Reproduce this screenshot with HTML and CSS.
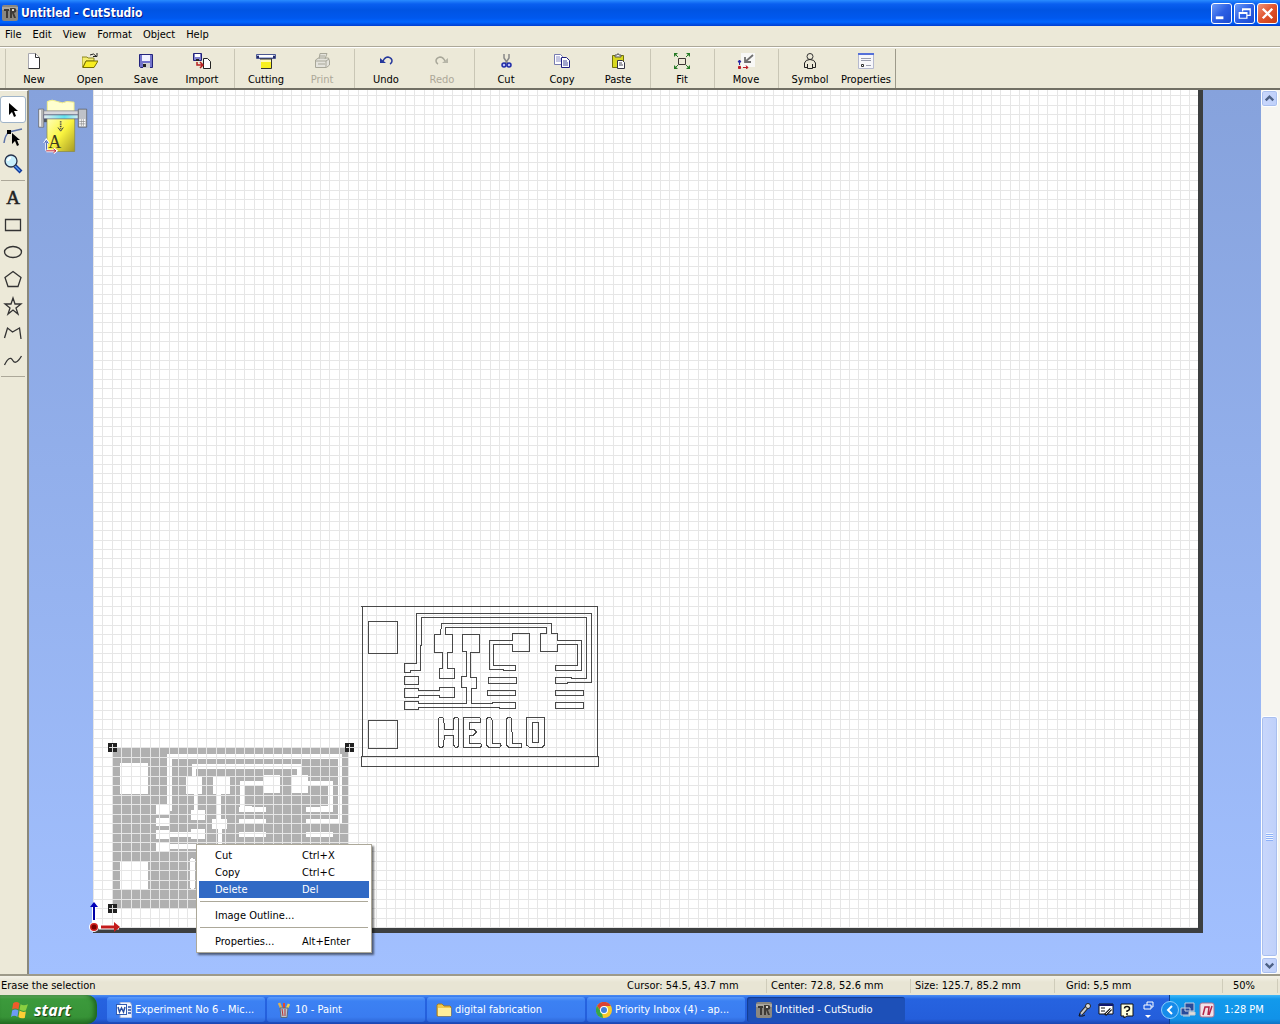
FILE: index.html
```html
<!DOCTYPE html>
<html lang="en">
<head>
<meta charset="utf-8">
<title>Untitled - CutStudio</title>
<link rel="stylesheet" href="styles.css">
</head>
<body>
<header class="titlebar">
  <svg class="app-icon" viewBox="0 0 16 16"><rect width="16" height="16" rx="2" fill="#8b8780"/><path d="M0 2h16v3H0z" fill="#aaa69e"/><path d="M2 4h5v2H6v7H4V6H2zM8 3h4q3 0 2 4l-2 1 2 5h-2l-2-5v5H8z" fill="#3e3a36"/><path d="M10 4h2v2h-2z" fill="#d8d4cc"/></svg>
  <h1>Untitled - CutStudio</h1>
  <button class="win-btn" aria-label="Minimize"><svg viewBox="0 0 20 20"><path d="M4 13h8v3H4z" fill="#fff"/></svg></button>
  <button class="win-btn" aria-label="Restore"><svg viewBox="0 0 20 20"><path d="M8 8V5h8v7h-3M4.500 9h8v6h-8zM5 10h7M8 6h8" fill="none" stroke="#fff" stroke-width="1.300"/></svg></button>
  <button class="win-btn close" aria-label="Close"><svg viewBox="0 0 20 20"><path d="M5 5l10 10M15 5L5 15" stroke="#fff" stroke-width="2.500"/></svg></button>
</header>
<nav class="menubar">
  <button>File</button><button>Edit</button><button>View</button><button>Format</button><button>Object</button><button>Help</button>
</nav>
<div class="toolbar">
  <div class="group">
    <button><svg viewBox="0 0 16 16"><path d="M2.500.5h7l4 4v11h-11z" fill="#fff" stroke="#a8a8b0"/><path d="M9.500.5v4h4M13.500 5v10.500h-11" fill="none" stroke="#333"/></svg>New</button>
    <button><svg viewBox="0 0 16 16"><path d="M0 4h5l1 1h6v3H4l-3 6H0z" fill="#f4ed70" stroke="#8c8620"/><path d="M4 8h12l-4 6.500H1z" fill="#f8ee20" stroke="#777000"/><path d="M8 2q4-2.500 6 1M11 3.500h4V0" fill="none" stroke="#222"/></svg>Open</button>
    <button><svg viewBox="0 0 16 16"><path d="M1.500 1.500h13v13h-12l-1-1z" fill="#7374cc" stroke="#23247c"/><path d="M4 2h8v6H4z" fill="#f2f2ff"/><path d="M5 10h7v5H5z" fill="#d3d3d3"/><path d="M5 11h3v3H5z" fill="#222"/></svg>Save</button>
    <button><svg class="wide" viewBox="0 0 18 16"><path d="M.5.5h8v7h-8z" fill="#8080ce" stroke="#222277"/><path d="M2 1h5v3H2z" fill="#fff"/><path d="M3 6h3v2H3z" fill="#222"/><path d="M10.500 5.500h4l3 3v7h-7z" fill="#fff" stroke="#222"/><path d="M4 9v3h5M7 9l3 3-3 3" fill="none" stroke="#b62020" stroke-width="1.500"/></svg>Import</button>
  </div>
  <div class="group">
    <button><svg class="wide" viewBox="0 0 20 16"><path d="M.5 1.500h19v4H.5z" fill="#aab4de" stroke="#4b5790"/><path d="M3 2h14v2H3z" fill="#fff"/><path d="M5 6h10v9H5z" fill="#f8f020"/><path d="M5 6h10v3H5z" fill="#fff9b8"/><path d="M4 6h12M15.500 6v9.500H5" fill="none" stroke="#333"/><path d="M1 3h2v2H1zM17 3h2v2h-2z" fill="#262c66"/></svg>Cutting</button>
    <button disabled><svg viewBox="0 0 16 16"><path d="M5 6l1-5.500h7L11 6M1.500 7l3-2h10l1 3v4l-3 2.500h-11z" fill="#e4e3dc" stroke="#a8a799"/><path d="M2 8h10v6M4 11h7M6 3h5M12 8l3-2" fill="none" stroke="#a8a799"/></svg>Print</button>
  </div>
  <div class="group">
    <button><svg viewBox="0 0 16 16"><path d="M5 8q2-4 5-4 4 1 4 4 0 2-2 3" fill="none" stroke="#25389c" stroke-width="1.500"/><path d="M2 5v5h6z" fill="#25389c"/></svg>Undo</button>
    <button disabled><svg viewBox="0 0 16 16"><path d="M11 8Q9 4 6 4 2 5 2 8q0 2 2 3" fill="none" stroke="#a8a799" stroke-width="1.500"/><path d="M14 5v5H8z" fill="#b7b6a8"/></svg>Redo</button>
  </div>
  <div class="group">
    <button><svg viewBox="0 0 16 16"><path d="M6 1v4l4 6M11 1v4l-4 6" fill="none" stroke="#888" stroke-width="1.500"/><circle cx="6" cy="12" r="2" fill="#b9bdf8" stroke="#1e2ba8" stroke-width="1.500"/><circle cx="11" cy="12" r="2" fill="#b9bdf8" stroke="#1e2ba8" stroke-width="1.500"/></svg>Cut</button>
    <button><svg viewBox="0 0 16 16"><path d="M.5 1.500h6l2 2v8h-8z" fill="#fff" stroke="#777bb0"/><path d="M2 4h4M2 6h5M2 8h5" stroke="#8a8dc6"/><path d="M7.500 4.500h5l3 3v7h-8z" fill="#fff" stroke="#202080"/><path d="M9 8h4M9 10h5M9 12h5" stroke="#454b9c"/></svg>Copy</button>
    <button><svg viewBox="0 0 16 16"><path d="M2.500 2.500h11v12h-11z" fill="#d8d820" stroke="#72720c"/><path d="M5 4V2h2l1-1.500L9 2h2v2z" fill="#eee" stroke="#555"/><path d="M7.500 7.500h5l2 2v6h-7z" fill="#fff" stroke="#334"/><path d="M9 10h3M9 12h4" stroke="#445"/></svg>Paste</button>
  </div>
  <div class="group">
    <button><svg viewBox="0 0 16 16"><path d="M4.500 5.500h7v6h-7z" fill="none" stroke="#3c3434"/><path d="M0 0h4L0 4zM16 0h-4l4 4zM0 16h4l-4-4zM16 16h-4l4-4z" fill="#267a26"/><path d="M1 1l3 3M15 1l-3 3M1 15l3-3M15 15l-3-3" stroke="#267a26"/></svg>Fit</button>
  </div>
  <div class="group">
    <button><svg class="wide" viewBox="0 0 18 16"><path d="M4 0h14v14H4z" fill="#f8f8f6"/><path d="M16 2L8 9M8 4v5h6" fill="none" stroke="#707070" stroke-width="1.800"/><path d="M2.500 12V9M1 9l1.500-2L4 9z" fill="#2727a4" stroke="#2727a4"/><path d="M1.500 13.500h2v2h-2zM6 14.500h5M9 12.500l2 2-2 1.500" fill="#bd1f28" stroke="#bd1f28"/></svg>Move</button>
  </div>
  <div class="group">
    <button><svg viewBox="0 0 16 16"><circle cx="8" cy="3.500" r="3" fill="none" stroke="#333"/><path d="M2.500 14.500V10q1-3.500 5.500-3.500T13.500 10v4.500h-3V11v4.500h-5V11v3.500z" fill="none" stroke="#222"/></svg>Symbol</button>
    <button><svg viewBox="0 0 16 16"><path d="M.5.5h15v15H.5z" fill="#f7f7fa" stroke="#b5b9ce"/><path d="M0 0h16v2H0z" fill="#5570d8"/><path d="M3 5.500h10M3 7.500h10M8 12.500h5" stroke="#9a9dad"/><path d="M3.500 11.500h2v2h-2z" fill="#fff" stroke="#303030"/></svg>Properties</button>
  </div>
</div>
<main class="work">
  <aside class="tools">
    <button class="active" aria-label="Select"><svg viewBox="0 0 20 20"><path d="M6 3v12l3-3 2 5 2-1-2-5h4z" fill="#000"/></svg></button>
    <button aria-label="Edit points"><svg class="plain" viewBox="0 0 20 20"><path d="M1 16q1-8 5-11l13-3" fill="none" stroke="#5c72a8" stroke-width="1.500"/><path d="M4 3h4v4H4zM9 6v11l3-3 2 5 2-1-2-5h3z" fill="#000"/></svg></button>
    <button aria-label="Zoom"><svg viewBox="0 0 20 20"><path d="M12 12l6 6" stroke="#123a9c" stroke-width="4"/><path d="M12 12l5 5" stroke="#5ba1f4"/><circle cx="8" cy="7" r="6" fill="#c8effc" stroke="#26324c"/><path d="M5 7q0-3 3-3" fill="none" stroke="#fff" stroke-width="2"/></svg></button>
    <hr>
    <button class="letter" aria-label="Text">A</button>
    <button aria-label="Rectangle"><svg viewBox="0 0 20 20"><path d="M2.500 4.500h15v11h-15z"/></svg></button>
    <button aria-label="Ellipse"><svg viewBox="0 0 20 20"><ellipse cx="10" cy="10" rx="8.500" ry="5.500"/></svg></button>
    <button aria-label="Polygon"><svg viewBox="0 0 20 20"><path d="M10 2.500l8 6-3 9H5l-3-9z"/></svg></button>
    <button aria-label="Star"><svg viewBox="0 0 20 20"><path d="M10 2l2 6h6l-5 4 2 6-5-4-5 4 2-6-5-4h6z"/></svg></button>
    <button aria-label="Polyline"><svg viewBox="0 0 20 20"><path d="M1.500 15l3-10 5 4 7-4 1.500 11"/></svg></button>
    <button aria-label="Curve"><svg viewBox="0 0 20 20"><path d="M1.500 15q5-10 8-5 3 6 9-4"/></svg></button>
    <hr>
  </aside>
  <section class="canvas">
    <svg class="cutter" viewBox="0 0 150 170">
      <defs><linearGradient id="sheet" x2="1" y2="1"><stop offset="0" stop-color="#ffffc0"/><stop offset=".5" stop-color="#fbf540"/><stop offset="1" stop-color="#a69a24"/></linearGradient><linearGradient id="bar"><stop offset="0" stop-color="#e8edf0"/><stop offset=".6" stop-color="#60e4ee"/><stop offset="1" stop-color="#d5eef2"/></linearGradient></defs>
      <path d="M28 40V10q14-8 30 0t28 0l22 2v30z" fill="#ffffcf" stroke="#f4f08a" stroke-width="3"/>
      <path d="M17 50h90v22H17z" fill="#4c5262"/>
      <path d="M27 56h83v104H27z" fill="url(#sheet)" stroke="#8a883c" stroke-width="2"/>
      <path d="M2 33h15v54H2z" fill="#f2f2f2" stroke="#555" stroke-width="2"/><path d="M12 34v52" stroke="#999" stroke-width="4"/>
      <path d="M17 38h104v12H17z" fill="#d8d8dc" stroke="#777" stroke-width="2"/><path d="M17 50h104v12H17z" fill="url(#bar)" stroke="#557" stroke-width="2"/>
      <path d="M121 33h25v54h-25z" fill="#bfc2c8" stroke="#555" stroke-width="2"/><path d="M124 63h18v21h-18z" fill="#fff"/><path d="M130 63v21M136 63v21M124 70h18M124 77h18" stroke="#888" stroke-width="2"/>
      <path d="M68 69v24" stroke="#444" stroke-width="5" stroke-dasharray="4 3"/><path d="M60 88l8 11 8-11" fill="none" stroke="#444" stroke-width="3"/>
      <path d="M25 158v-26M19 136l6-9 6 9" fill="none" stroke="#fff" stroke-width="8"/><path d="M25 158v-26M19 136l6-9 6 9" fill="none" stroke="#3050b0" stroke-width="3"/>
      <path d="M25 158h28M46 152l8 6-8 6" fill="none" stroke="#fff" stroke-width="8"/><path d="M25 158h28M46 152l8 6-8 6" fill="none" stroke="#c02a38" stroke-width="3"/>
      <text x="31" y="151" class="cutter-letter">A</text>
    </svg>
    <div class="paper">
      <svg class="bitmap" viewBox="54 6 744 516" shape-rendering="crispEdges">
        <path d="M69 24h705v480H69z" fill="#b0b0b0"/>
        <g fill="#fff">
          <path d="M90 69h85v94H90zM90 364h85v84H90zM198 194h40v27h-40zM198 233h40v26h-40zM198 270h40v26h-40zM198 308h40v26h-40zM288 107h48v54h-48zM370 107h49v54h-49zM302 209h43v30h-43zM302 266h43v30h-43zM367 236h44v32h-44zM521 104h49v54h-49zM604 104h50v54h-50zM448 200h80v16h-80zM448 237h80v16h-80zM448 276h80v15h-80zM648 200h80v16h-80zM648 237h80v16h-80zM648 276h80v15h-80z"/>
          <rect x="299" y="355" width="16" height="92" rx="7"/>
        </g>
        <path d="M238 214V50h512v194H700M312 108V79h317v27M318 160v50M387 160v78M390 266v54H238M238 283h65M522 131h-66v75h30M652 131h70v75h-30" fill="none" stroke="#fff" stroke-width="14"/>
      </svg>
      <div class="grid"></div>
      <svg class="bitmap" viewBox="54 6 744 516" shape-rendering="crispEdges">
        <path d="M54 9h27v27H54zM765 9h27v27h-27zM54 492h27v27H54z" fill="#222"/>
        <path d="M67.500 12v24M57 22.500h24M778.500 12v24M768 22.500h24M67.500 495v24M57 505.500h24" stroke="#ddd" stroke-width="3"/>
      </svg>
      <svg class="outline" viewBox="0 0 750 516" shape-rendering="crispEdges">
        <g fill="none" stroke="#484848" stroke-width="3">
          <path d="M19 19h709v451M21 19v451M19 469h712v30H19z"/>
          <path d="M40 65h88v95H40zM40 361h88v84H40z"/>
          <path d="M148 191h36V41h526v207H636v3h-35v-18h47v3h47V53H200v82h-4v77h-30v5h-18z"/>
          <path d="M148 229h43v24h-43zM148 265h43v6h63v-9h45v30h-45v-6h-63v6h-43z"/>
          <path d="M238 103h18l4-32h330v30h17v21h73v88h-79v-14h67v-62h-61v20h-51v-54h17V82H271v21h20v54h-13v49h21v29h-45v-29h9v-49h-25z"/>
          <path d="M323 103h51v54h-28v75h19v33h-15v46h63v-4h69v18h-50v-4H191v6h-43v-24h43v6h144v-46h-16v-33h14v-75h-10z"/>
          <path d="M472 101h51v53h-51v-21h-56v63h66v15h-37v-3h-41v-86h68z"/>
          <path d="M401 232h83v18h-83zM398 271h84v15h-84zM601 271h85v15h-85zM601 308h85v17h-85z"/>
          <path d="M250 359q0-7 8-7t8 7l3 29h27v-29q0-7 8-7t7 7v75q0 8-7 8t-8-8v-28h-28l-2 28q0 8-8 8t-8-8zM326 352h47q8 8 3 15h-33v21h13l9 8-9 9h-13v24h33q8 6 0 13h-50zM395 359q0-7 7-7t9 7v70h23q9 6 0 13h-32l-7-7zM455 359q0-7 7-7t8 7l2 70h27v13h-37l-7-7zM515 352h54v83l-7 7h-39l-8-7zM532 367h18v60h-18z"/>
        </g>
      </svg>
      <svg class="origin" viewBox="0 0 36 36"><path d="M6 25V8" stroke="#fff" stroke-width="4"/><path d="M11 28h20" stroke="#fff" stroke-width="5"/><path d="M6 21V8" stroke="#0000a8" stroke-width="2"/><path d="M2 8l4-5 4 5z" fill="#0000b8"/><circle cx="6" cy="28" r="5" fill="#fff"/><circle cx="6" cy="28" r="4" fill="#d42020"/><circle cx="6" cy="28" r="2.500" fill="#700"/><path d="M13 28h14" stroke="#c41c1c" stroke-width="3"/><path d="M26 23l6 5-6 5z" fill="#c41c1c"/></svg>
      <div class="context" role="menu">
        <button><span>Cut</span><span>Ctrl+X</span></button>
        <button><span>Copy</span><span>Ctrl+C</span></button>
        <button class="selected"><span>Delete</span><span>Del</span></button>
        <hr>
        <button><span>Image Outline...</span></button>
        <hr>
        <button><span>Properties...</span><span>Alt+Enter</span></button>
      </div>
    </div>
  </section>
  <div class="scroll">
    <button aria-label="Scroll up"><svg viewBox="0 0 16 16"><path d="M4 10l4-4 4 4" fill="none" stroke="#4d6185" stroke-width="2.500"/></svg></button>
    <div class="track"><div class="thumb"></div></div>
    <button aria-label="Scroll down"><svg viewBox="0 0 16 16"><path d="M4 6l4 4 4-4" fill="none" stroke="#4d6185" stroke-width="2.500"/></svg></button>
  </div>
</main>
<footer class="status">
  <span class="message">Erase the selection</span>
  <span class="cell">Cursor: 54.5, 43.7 mm</span>
  <span class="cell">Center: 72.8, 52.6 mm</span>
  <span class="cell">Size: 125.7, 85.2 mm</span>
  <span class="cell grid-size">Grid: 5,5 mm</span>
  <span class="cell percent">50%</span>
</footer>
<div class="taskbar">
  <button class="start"><svg viewBox="0 0 18 18"><path d="M3 3q3-2 6 0L8 9Q5 7 2 9z" fill="#ee5b2b"/><path d="M10 4q3 2 7 0l-2 6q-3 1-6-1z" fill="#8bd041"/><path d="M2 10q3-2 6 0l-1 6q-3-2-6 0z" fill="#6d9bf4"/><path d="M9 10q3 2 6 1l-1 6q-4 1-6-1z" fill="#fccf36"/></svg>start</button>
  <div class="tasks">
    <button><svg viewBox="0 0 16 16"><path d="M4 0h10l2 3v13H4z" fill="#eef3ff" stroke="#8a9dcc"/><path d="M0 2h11v11H0z" fill="#315bb2"/><path d="M1 3h9v9H1z" fill="#fff"/><path d="M2 5l1.500 5L5.500 6l2 4L9 5M12 5h3M12 8h3M12 11h3" fill="none" stroke="#2b50a4" stroke-width="1.500"/></svg><span>Experiment No 6 - Mic...</span></button>
    <button><svg viewBox="0 0 16 16"><path d="M6 8L3 1" stroke="#e0b050" stroke-width="2.500"/><path d="M8 8V1" stroke="#e04b30" stroke-width="2"/><path d="M10 8l3-6" stroke="#f1d34c" stroke-width="2.500"/><path d="M4 6h8l-1 9.500H5z" fill="#b9c6ce" stroke="#5a6a80"/><path d="M6 7l1 7M9 7v7" stroke="#b33"/></svg><span>10 - Paint</span></button>
    <button><svg viewBox="0 0 16 16"><path d="M1 3l1-1h4l2 2h6l1 1v9H1z" fill="#f2c94c" stroke="#a77d20"/><path d="M2 6h13v8H2z" fill="#ffed9a"/></svg><span>digital fabrication</span></button>
    <button><svg viewBox="0 0 16 16"><circle cx="8" cy="8" r="8" fill="#f6c92c"/><path d="M1 4a8 8 0 0 1 14 0H8L5 9z" fill="#db4334"/><path d="M1 4l5 7 1 5A8 8 0 0 1 1 4z" fill="#35a64a"/><circle cx="8" cy="8" r="4" fill="#fff"/><circle cx="8" cy="8" r="3" fill="#3f80dd"/></svg><span>Priority Inbox (4) - ap...</span></button>
    <button class="current"><svg viewBox="0 0 16 16"><rect width="16" height="16" rx="2" fill="#8b8780"/><path d="M0 2h16v3H0z" fill="#aaa69e"/><path d="M2 4h5v2H6v7H4V6H2zM8 3h4q3 0 2 4l-2 1 2 5h-2l-2-5v5H8z" fill="#3e3a36"/><path d="M10 4h2v2h-2z" fill="#d8d4cc"/></svg><span>Untitled - CutStudio</span></button>
  </div>
  <div class="language">
    <svg viewBox="0 0 16 16"><path d="M4 12l6-7" stroke="#222" stroke-width="4"/><path d="M4 12l6-7" stroke="#ccc" stroke-width="2"/><circle cx="11" cy="4" r="2.500" fill="#ddd" stroke="#222"/><path d="M3 11l-1 3h4l2-1" fill="none" stroke="#111"/></svg>
    <svg viewBox="0 0 16 16"><path d="M1 2h14v10H1z" fill="#fff" stroke="#111"/><path d="M1 2h14v2H1z" fill="#111870"/><path d="M3 6h4M3 9h4" stroke="#111"/><path d="M7 13l6-6" stroke="#222" stroke-width="3"/><path d="M8 12l5-5" stroke="#ddd"/></svg>
    <svg viewBox="0 0 16 16"><path d="M2 2h12v12H8l-3 2v-2H2z" fill="#ffffdc" stroke="#111"/><path d="M5.500 6.500q0-2 2.500-2t2.500 2T8 9v1M8 11v2" fill="none" stroke="#111" stroke-width="1.500"/></svg>
    <svg viewBox="0 0 16 20"><path d="M7 5V2h6v5h-2M4 5h7v4H4z" fill="none" stroke="#fff"/><path d="M5 15h6l-3 3z" fill="#fff"/></svg>
  </div>
  <div class="tray">
    <button aria-label="Show hidden icons"><svg viewBox="0 0 18 18"><circle cx="9" cy="9" r="8.500" fill="#168bea" stroke="#8acdfc"/><path d="M11 5L7 9l4 4" fill="none" stroke="#fff" stroke-width="2"/></svg></button>
    <svg viewBox="0 0 16 16"><path d="M5 1h9v8H5zM1 6h9v7H1z" fill="#284b9a" stroke="#c5cfdf"/><path d="M3 14h7M9 10h6v3H9z" fill="#ddd" stroke="#ccc"/></svg>
    <svg viewBox="0 0 16 16"><rect x="1" y="1" width="14" height="14" rx="2" fill="#f1e2e9" stroke="#af7390"/><path d="M4 13L6 5h4l-1 8M10 13l3-9" fill="none" stroke="#b52448" stroke-width="1.500"/></svg>
    <time>1:28 PM</time>
  </div>
</div>
</body>
</html>
```
FILE: styles.css
```css
* { box-sizing: border-box; }
body {
  margin: 0;
  height: 100vh;
  display: flex;
  flex-direction: column;
  overflow: hidden;
  background: #ece9d8;
  color: #000;
  font: 11px/14px "DejaVu Sans Condensed", "Noto Sans", sans-serif;
}
button {
  margin: 0;
  padding: 0;
  border: 0;
  background: none;
  color: inherit;
  font: inherit;
}
svg { display: block; flex: none; }

.titlebar {
  flex: none;
  height: 26px;
  padding: 0 2px;
  display: flex;
  align-items: center;
  gap: 2px;
  background: linear-gradient(#2a8cff 0, #0a5ff0 4px, #0054e3 10px, #0058ee 18px, #0066ff 22px, #003dd0 26px);
}
.app-icon { width: 16px; height: 16px; }
.titlebar h1 {
  flex: 1;
  margin: 0;
  padding-left: 1px;
  color: #fff;
  font: bold 12px/16px "DejaVu Sans Condensed", "Open Sans", sans-serif;
  text-shadow: 1px 1px #0a1883;
}
.win-btn {
  width: 21px;
  height: 21px;
  border: 1px solid #fff;
  border-radius: 3px;
  background: linear-gradient(135deg, #6d9cf8, #2c5fe4 50%, #1b4bd0);
}
.win-btn svg { width: 19px; height: 19px; }
.close { background: linear-gradient(135deg, #f0937a, #e0532c 50%, #c83c14); }

.menubar {
  flex: none;
  height: 21px;
  padding-bottom: 2px;
  display: flex;
  border-bottom: 1px solid #aca899;
}
.menubar button { padding: 0 6px 0 5px; }

.toolbar {
  flex: none;
  height: 43px;
  display: flex;
  padding: 1px 0 0 5px;
  border-top: 1px solid #fff;
  border-bottom: 2px solid #716f64;
}
.group {
  display: flex;
  padding: 0 4px 0 3px;
  border-left: 1px solid #c9c6b5;
}
.group:first-child { padding-left: 0; }
.group:last-child { padding-right: 1px; border-right: 1px solid #9d9a8a; }
.group button {
  width: 56px;
  padding-top: 4px;
  display: flex;
  flex-direction: column;
  align-items: center;
  gap: 4px;
}
.group svg { width: 16px; height: 16px; }
.group svg.wide { width: 20px; }
.group button:disabled { color: #aca899; }

.work {
  flex: 1;
  min-height: 0;
  display: flex;
}
.tools {
  width: 29px;
  padding-top: 5px;
  border-right: 2px solid #8a887c;
  display: flex;
  flex-direction: column;
  align-items: flex-start;
  border-top: 1px solid #fff;
}
.tools button {
  width: 26px;
  height: 27px;
  display: grid;
  place-items: center;
}
.tools svg { width: 20px; height: 20px; fill: none; stroke: #333; stroke-width: 1.3; }
.tools .plain, .tools .active svg { stroke: none; }
.tools .active { background: #fff; border: 1px solid #a0b4c8; border-radius: 3px; }
.tools hr { width: 24px; margin: 3px 1px; border: 0; border-top: 1px solid #aca899; }
.tools .letter { font: 19px/20px "Liberation Serif", serif; color: #222; -webkit-text-stroke: 0.5px #222; }

.canvas {
  flex: 1;
  position: relative;
  display: flex;
  padding: 0 58px 41px 64px;
  overflow: hidden;
  background: linear-gradient(#86a2dc, #a2c0ff);
}
.cutter { position: absolute; left: 9px; top: 8px; width: 50px; height: 57px; }
.cutter-letter { font: 54px "Liberation Serif", serif; fill: #3d3a20; }
.paper {
  flex: 1;
  position: relative;
  border: solid #3c3f40;
  border-width: 0 5px 5px 0;
  background: #fff;
}
.grid {
  position: absolute;
  inset: 0;
  background: url("data:image/svg+xml,%3Csvg xmlns='http://www.w3.org/2000/svg' width='189' height='189'%3E%3Cpath fill='none' stroke='%23e6e6e6' d='M.5 0v189M9.500 0v189M19.500 0v189M28.500 0v189M38.500 0v189M47.500 0v189M57.500 0v189M66.500 0v189M76.500 0v189M85.500 0v189M94.500 0v189M104.500 0v189M113.500 0v189M123.500 0v189M132.500 0v189M142.500 0v189M151.500 0v189M161.500 0v189M170.500 0v189M180.500 0v189M0 188.500h189M0 179.500h189M0 169.500h189M0 160.500h189M0 150.500h189M0 141.500h189M0 131.500h189M0 122.500h189M0 112.500h189M0 103.500h189M0 94.500h189M0 84.500h189M0 75.500h189M0 65.500h189M0 56.500h189M0 46.500h189M0 37.500h189M0 27.500h189M0 18.500h189M0 8.500h189'/%3E%3C/svg%3E") left bottom;
}
.bitmap { position: absolute; left: 15px; bottom: 14px; width: 248px; height: 172px; }
.outline { position: absolute; left: 262px; bottom: 156px; width: 250px; height: 172px; }
.origin { position: absolute; left: -5px; bottom: -7px; width: 36px; height: 36px; }

.context {
  position: absolute;
  left: 103px;
  bottom: -25px;
  width: 176px;
  padding: 2px;
  border: 1px solid #aca899;
  background: #fff;
  box-shadow: 2px 2px 2px #0008;
}
.context button {
  width: 100%;
  height: 17px;
  padding-left: 16px;
  display: flex;
  align-items: center;
  text-align: left;
}
.context span:first-child { width: 87px; white-space: nowrap; }
.context .selected { background: #316ac5; color: #fff; }
.context hr { margin: 3px 1px 5px; border: 0; border-top: 1px solid #aca899; }

.scroll {
  width: 19px;
  padding-right: 2px;
  display: flex;
  flex-direction: column;
  background: #f6f5f0;
}
.scroll button, .thumb {
  border: 1px solid #fff;
  border-radius: 3px;
  background: linear-gradient(90deg, #c9d7fc, #bfd0fa);
  box-shadow: inset 0 0 0 1px #a9bfee;
}
.scroll button { height: 17px; }
.scroll button svg { width: 15px; height: 15px; }
.track { flex: 1; display: flex; flex-direction: column; justify-content: flex-end; }
.thumb { height: 28.3%; display: grid; place-items: center; }
.thumb::before {
  content: "";
  width: 7px;
  height: 8px;
  background: repeating-linear-gradient(#eef4fe 0 1px, #8cb0f8 1px 2px);
}

.status {
  flex: none;
  height: 21px;
  padding-right: 2px;
  display: flex;
  align-items: center;
  border-top: 2px solid #9d9a8a;
  background: linear-gradient(#f4f2e8, #e8e5d4 6px);
}
.message { flex: 1; padding-left: 1px; }
.cell { width: 144px; padding-left: 4px; border-left: 1px solid #cfccba; }
.message + .cell { border-color: transparent; }
.grid-size { width: 168px; padding-left: 11px; }
.percent { width: 56px; padding-left: 10px; border-right: 1px solid #cfccba; }

.taskbar {
  flex: none;
  height: 29px;
  display: flex;
  color: #fff;
  background: linear-gradient(#4a8df5 0, #2663e0 4px, #245edb 24px, #1b45b0);
}
.start {
  width: 97px;
  padding-left: 10px;
  display: flex;
  align-items: center;
  gap: 5px;
  border-radius: 0 10px 10px 0;
  background: linear-gradient(#6cb46a 0, #3c9a3c 4px, #379337 22px, #256f25);
  box-shadow: inset -3px 0 4px #1f661f;
  font: italic bold 16px/20px "Open Sans", sans-serif;
  text-shadow: 1px 1px 1px #173f17;
}
.start svg { width: 19px; height: 19px; }
.tasks {
  flex: 1;
  min-width: 0;
  padding: 2px 0 2px 10px;
  display: flex;
  gap: 2px;
}
.tasks button {
  width: 158px;
  padding: 0 9px;
  display: flex;
  align-items: center;
  gap: 3px;
  border-radius: 3px;
  background: linear-gradient(#5c9cfa 0, #3c81f3 4px, #3a7cf0 20px, #2e68d8);
  white-space: nowrap;
}
.tasks .current { background: #1d50b8; box-shadow: inset 1px 1px 1px #153c90; }
.tasks svg, .language svg, .tray svg { width: 16px; height: 16px; }
.language { display: flex; align-items: center; gap: 5px; padding-right: 13px; }
.language svg:last-child { height: 20px; }
.tray {
  width: 111px;
  display: flex;
  align-items: center;
  gap: 3px;
  border-left: 1px solid #0b3f92;
  background: linear-gradient(#3fb8f8 0, #129aec 4px, #1192e8 24px, #0e72c4);
}
.tray button svg { width: 18px; height: 18px; margin-left: -9px; }
.tray button { width: 7px; }
.tray time { padding-left: 6px; white-space: nowrap; }
```
